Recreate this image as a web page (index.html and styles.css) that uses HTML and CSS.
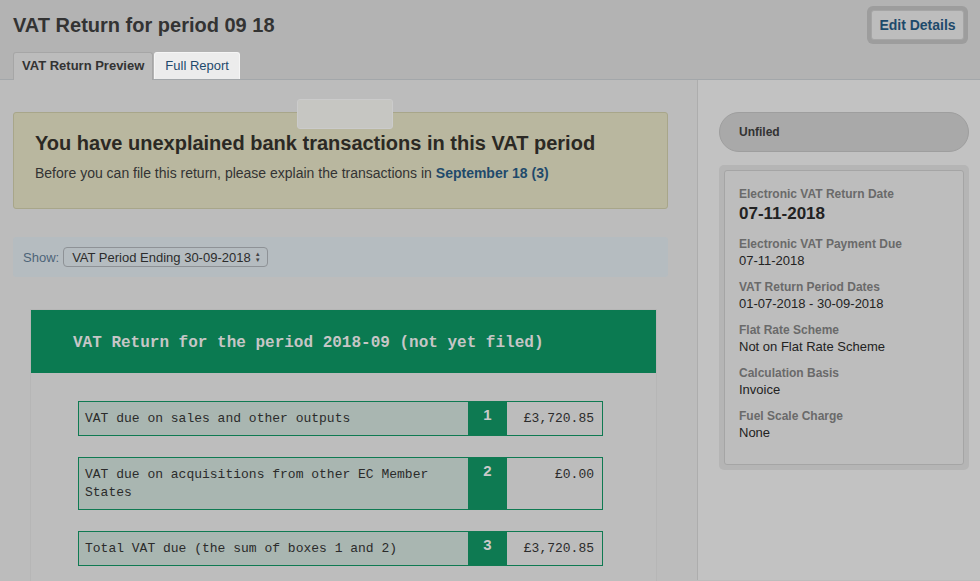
FILE: index.html
```html
<!DOCTYPE html>
<html lang="en">
<head>
  <meta charset="UTF-8" />
  <title>VAT Return for period 09 18</title>
  <link rel="stylesheet" href="styles.css">
</head>
<body>
  <div class="page-head">
    <div class="head-row">
      <h1>VAT Return for period 09 18</h1>
      <div class="btn-ring"><button class="btn">Edit Details</button></div>
    </div>
    <div class="tabs">
      <div class="tab active">VAT Return Preview</div>
      <div class="tab highlight">Full Report</div>
    </div>
  </div>

  <div class="layout">
    <div class="main">
      <div class="ghost"></div>

      <div class="alert">
        <h2>You have unexplained bank transactions in this VAT period</h2>
        <p>Before you can file this return, please explain the transactions in <a href="#">September 18 (3)</a></p>
      </div>

      <div class="show-bar">
        <span class="show-label">Show:</span>
        <div class="select">VAT Period Ending 30-09-2018 <span class="arrows">&#9650;<br>&#9660;</span></div>
      </div>

      <div class="report">
        <div class="report-head">VAT Return for the period 2018-09 (not yet filed)</div>
        <div class="report-body">
          <div class="box-row">
            <div class="box-label">VAT due on sales and other outputs</div>
            <div class="box-num">1</div>
            <div class="box-amount">&pound;3,720.85</div>
          </div>
          <div class="box-row">
            <div class="box-label">VAT due on acquisitions from other EC Member States</div>
            <div class="box-num">2</div>
            <div class="box-amount">&pound;0.00</div>
          </div>
          <div class="box-row">
            <div class="box-label">Total VAT due (the sum of boxes 1 and 2)</div>
            <div class="box-num">3</div>
            <div class="box-amount">&pound;3,720.85</div>
          </div>
        </div>
      </div>
    </div>

    <div class="sidebar">
      <div class="status">Unfiled</div>
      <div class="info-ring">
        <div class="info">
          <div class="field">
            <div class="label">Electronic VAT Return Date</div>
            <div class="value big">07-11-2018</div>
          </div>
          <div class="field">
            <div class="label">Electronic VAT Payment Due</div>
            <div class="value">07-11-2018</div>
          </div>
          <div class="field">
            <div class="label">VAT Return Period Dates</div>
            <div class="value">01-07-2018 - 30-09-2018</div>
          </div>
          <div class="field">
            <div class="label">Flat Rate Scheme</div>
            <div class="value">Not on Flat Rate Scheme</div>
          </div>
          <div class="field">
            <div class="label">Calculation Basis</div>
            <div class="value">Invoice</div>
          </div>
          <div class="field">
            <div class="label">Fuel Scale Charge</div>
            <div class="value">None</div>
          </div>
        </div>
      </div>
    </div>
  </div>
</body>
</html>
```

FILE: styles.css
```css
* {
  box-sizing: border-box;
  margin: 0;
  padding: 0;
}

body {
  background-color: #bcbcbc;
  color: #2a2a2a;
  font-family: 'Liberation Sans', Arial, sans-serif;
  height: 581px;
  overflow: hidden;
}

.page-head {
  background: #b3b3b3;
  border-bottom: 1px solid #a3a7aa;
  padding: 0 13px;
}

.head-row {
  display: flex;
  justify-content: space-between;
  align-items: flex-start;
  height: 52px;
}

h1 {
  font-size: 20px;
  font-weight: 700;
  color: #333;
  margin-top: 14px;
}

.btn-ring {
  margin-top: 6px;
  margin-right: -1px;
  padding: 4px;
  border-radius: 6px;
  background: #9d9d9d;
}

.btn {
  display: block;
  width: 93px;
  height: 30px;
  border: 1px solid #a5a5a5;
  border-radius: 3px;
  background: #bdbdbd;
  color: #1d4a6b;
  font-family: 'Liberation Sans', Arial, sans-serif;
  font-weight: 700;
  font-size: 14px;
}

.tabs {
  display: flex;
  height: 28px;
  margin-bottom: -1px;
}

.tab {
  font-size: 13px;
  line-height: 26px;
  padding: 0 8px;
  white-space: nowrap;
  border: 1px solid #a6a6a6;
  border-bottom: none;
  border-radius: 3px 3px 0 0;
}

.tab.active {
  background: #bcbcbc;
  font-weight: 700;
  color: #333;
  height: 28px;
}

.tab.highlight {
  background: #ececec;
  color: #1e4a6d;
  border-color: #f5f5f5;
  margin-left: 1px;
  height: 27px;
  padding: 0 10px;
}

.layout {
  display: flex;
  height: 500px;
}

.main {
  position: relative;
  width: 697px;
  padding: 32px 29px 0 13px;
}

.ghost {
  position: absolute;
  left: 297px;
  top: 19px;
  width: 96px;
  height: 30px;
  background: #c6c6c2;
  border: 1px solid #cbcbcb;
  border-radius: 3px;
}

.alert {
  background: #b9b79f;
  border: 1px solid #a8a68a;
  border-radius: 3px;
  height: 97px;
  padding: 19px 21px 0;
}

.alert h2 {
  font-size: 20px;
  font-weight: 700;
  color: #2b2924;
  margin-bottom: 10px;
}

.alert p {
  font-size: 14px;
  color: #333;
}

.alert a {
  color: #1f4a6b;
  font-weight: 700;
  text-decoration: none;
}

.show-bar {
  display: flex;
  align-items: center;
  gap: 4px;
  margin-top: 28px;
  height: 40px;
  background: #b5bcc0;
  border-radius: 3px;
  padding: 0 10px;
}

.show-label {
  font-size: 13px;
  color: #4d6478;
}

.select {
  display: flex;
  align-items: center;
  gap: 4px;
  height: 20px;
  padding: 0 6px 0 8px;
  border: 1px solid #8e9296;
  border-radius: 4px;
  font-size: 13px;
  color: #2c2c2c;
}

.arrows {
  font-size: 6px;
  line-height: 6px;
  color: #444;
}

.report {
  margin: 32px 11px 0 17px;
  background: #bdbdbd;
  border: 1px solid #b6b6b6;
  height: 300px;
}

.report-head {
  background: #0b7a51;
  height: 63px;
  padding: 2px 42px 0;
  display: flex;
  align-items: center;
  font-family: 'Liberation Mono', 'Courier New', monospace;
  font-weight: 700;
  font-size: 16px;
  color: #c6c6c6;
}

.report-body {
  display: flex;
  flex-direction: column;
  gap: 21px;
  padding: 28px 53px 0 47px;
}

.box-row {
  display: flex;
  border: 1px solid #0f7a52;
  font-family: 'Liberation Mono', 'Courier New', monospace;
  font-size: 13px;
  color: #2b2b2b;
}

.box-label {
  flex: 1;
  background: #a9b6b1;
  padding: 8px 6px 7px;
  line-height: 18px;
}

.box-num {
  width: 39px;
  background: #0e7a52;
  color: #c9c9c9;
  font-family: 'Liberation Sans', Arial, sans-serif;
  font-weight: 700;
  font-size: 15px;
  text-align: center;
  padding-top: 4px;
}

.box-amount {
  width: 95px;
  background: #bcbcbc;
  text-align: right;
  padding: 8px 8px 7px;
  line-height: 18px;
}

.sidebar {
  flex: 1;
  background: #c2c2c2;
  border-left: 1px solid #adadad;
  padding: 32px 11px 0 21px;
}

.status {
  height: 40px;
  border-radius: 20px;
  background: #a9a9a9;
  border: 1px solid #9e9e9e;
  padding-left: 19px;
  line-height: 38px;
  font-size: 12px;
  font-weight: 700;
  color: #333;
}

.info-ring {
  margin-top: 13px;
  padding: 5px;
  border-radius: 5px;
  background: #b5b5b5;
  width: 250px;
}

.info {
  background: #bdbdbd;
  border: 1px solid #a5a5a5;
  border-radius: 3px;
  padding: 16px 14px 22px;
  display: flex;
  flex-direction: column;
  gap: 10px;
}

.label {
  font-size: 12px;
  font-weight: 700;
  color: #6a6a6a;
  line-height: 15px;
}

.value {
  font-size: 13px;
  color: #222;
  line-height: 18px;
}

.value.big {
  font-size: 17px;
  font-weight: 700;
  line-height: 24px;
  margin-bottom: 1px;
}
```
